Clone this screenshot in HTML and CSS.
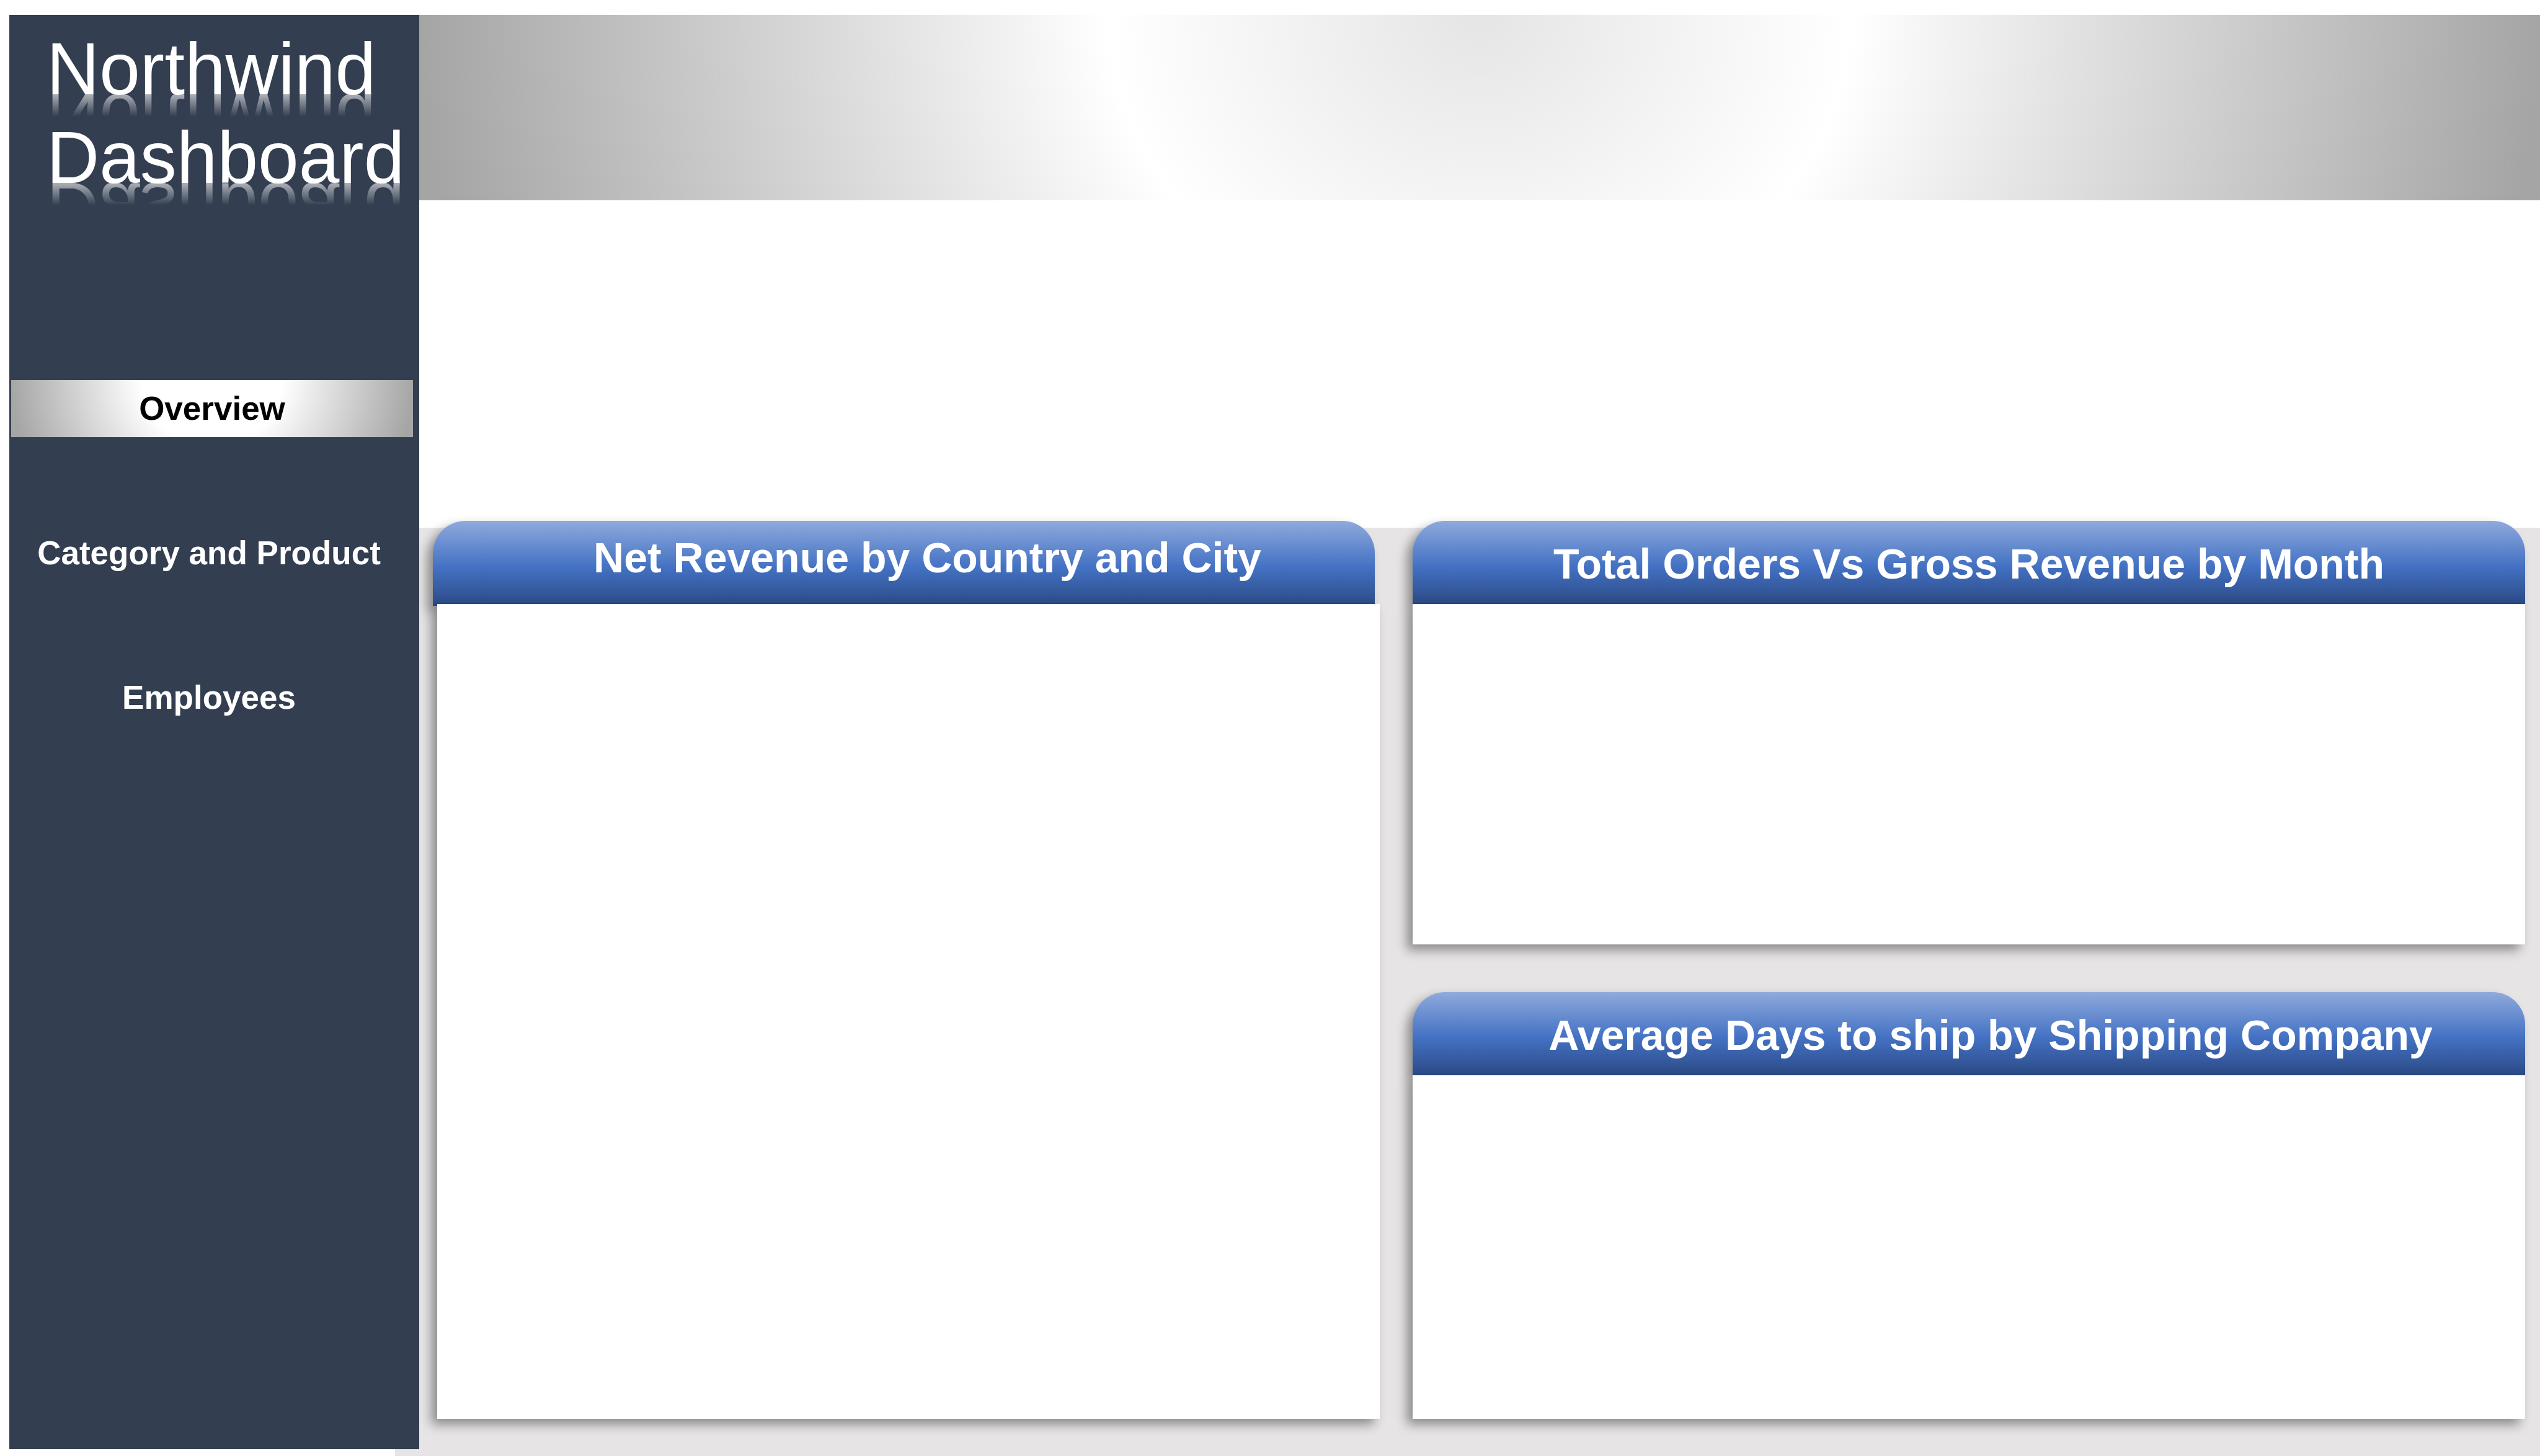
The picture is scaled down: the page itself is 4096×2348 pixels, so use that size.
FILE: index.html
```html
<!DOCTYPE html>
<html lang="en">
<head>
<meta charset="utf-8">
<title>Northwind Dashboard</title>
<link rel="stylesheet" href="styles.css">
</head>
<body>
<div class="page">
  <aside class="sidebar">
    <h1 class="brand"><span class="brand-line">Northwind</span><span class="brand-line">Dashboard</span></h1>
    <nav class="nav">
      <a class="nav-link nav-link-active" href="#overview" aria-current="page">Overview</a>
      <a class="nav-link" href="#category">Category and Product</a>
      <a class="nav-link" href="#employees">Employees</a>
    </nav>
  </aside>
  <div class="content">
    <header class="banner"></header>
    <main class="board">
      <section class="panel panel-revenue">
        <h2 class="panel-title">Net Revenue by Country and City</h2>
        <div class="panel-body"></div>
      </section>
      <div class="stack">
        <section class="panel panel-orders">
          <h2 class="panel-title">Total Orders Vs Gross Revenue by Month</h2>
          <div class="panel-body"></div>
        </section>
        <section class="panel panel-shipping">
          <h2 class="panel-title">Average Days to ship by Shipping Company</h2>
          <div class="panel-body"></div>
        </section>
      </div>
    </main>
  </div>
</div>
</body>
</html>
```
FILE: styles.css
```css
* { box-sizing: border-box; }

body {
  margin: 0;
  background: #fff;
  font-family: "Liberation Sans", Arial, sans-serif;
}

.page {
  display: flex;
  min-height: 100vh;
  padding: 24px 0 0 15px;
}

/* Sidebar */
.sidebar {
  position: relative;
  z-index: 1;
  flex: 0 0 661px;
  margin-bottom: 11px;
  background: #333e50;
  color: #fff;
}

.brand {
  margin: 0;
  padding: 16px 0 0 60px;
  font-size: 118px;
  font-weight: 400;
  line-height: 143px;
}

.brand-line {
  display: block;
  -webkit-box-reflect: below -62px linear-gradient(transparent 76px, rgba(255, 255, 255, 0.6) 112px);
}

.nav {
  display: flex;
  flex-direction: column;
  gap: 141px;
  padding: 287px 10px 0 3px;
}

.nav-link {
  padding-right: 10px;
  color: #fff;
  font-size: 53px;
  font-weight: 700;
  line-height: 92px;
  text-align: center;
  text-decoration: none;
}

.nav-link-active {
  padding-right: 0;
  background: radial-gradient(ellipse 50% 320% at 50% 0, #fff 35%, #a6a6a6 100%);
  color: #000;
}

/* Main column */
.content {
  display: flex;
  flex: 1;
  flex-direction: column;
}

.banner {
  height: 299px;
  background: radial-gradient(ellipse 50% 490% at 50% 0, #e5e5e5, #fff 35%, #a5a5a5 100%);
}

.board {
  display: flex;
  flex: 1;
  gap: 53px;
  margin: 528px 0 0 -39px;
  padding: 0 24px 60px 61px;
  background: #e6e4e5;
}

.stack {
  display: flex;
  flex: 1794;
  flex-direction: column;
  gap: 77px;
}

.panel {
  display: flex;
  flex-direction: column;
}

.panel-revenue { flex: 1527; }
.panel-orders { flex: 683; }
.panel-shipping { flex: 688; }

.panel-revenue,
.panel-orders { margin-top: -11px; }

.panel-title {
  height: 134px;
  margin: 0;
  border-radius: 52px 52px 0 0;
  background: linear-gradient(#8faadc, #4472c4 54%, #2b4a85);
  box-shadow: -9px 9px 17px rgba(0, 0, 0, 0.4);
  color: #fff;
  font-size: 68px;
  font-weight: 700;
  line-height: 138px;
  text-align: center;
}

.panel-shipping .panel-title { padding-left: 70px; }

.panel-body {
  position: relative;
  flex: 1;
  background: #fff;
  box-shadow: -9px 9px 17px rgba(0, 0, 0, 0.4);
}

/* The revenue header sits a little left of its body */
.panel-revenue .panel-title {
  height: 137px;
  margin: 0 8px -3px 0;
  padding-left: 76px;
  line-height: 118px;
}

.panel-revenue .panel-body { margin-left: 7px; }
```
